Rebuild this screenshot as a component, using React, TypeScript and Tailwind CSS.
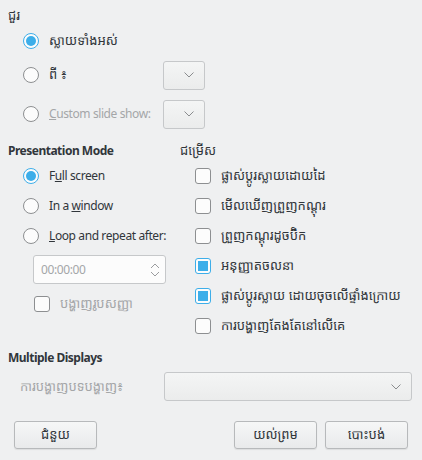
import React from "react";

const F = { fontFamily: '"Noto Sans", "Noto Sans Khmer", "Khmer OS", sans-serif' };
const L = "text-[12px] tracking-[-0.4px]";

function Radio({ checked, label, disabled, latin }: { checked?: boolean; label: React.ReactNode; disabled?: boolean; latin?: boolean }) {
  return (
    <div className="flex items-center h-[30px] whitespace-nowrap">
      <div
        className={
          "w-[16px] h-[16px] shrink-0 rounded-full border flex items-center justify-center bg-[#fcfcfc] " +
          (checked ? "border-[#3daee9]" : "border-[#8d8f91]")
        }
      >
        {checked && <div className="w-[10px] h-[10px] rounded-full bg-[#3daee9]" />}
      </div>
      <span className={"ml-[10px] " + (latin ? L + " " : "") + (disabled ? "text-[#a4a6a8]" : "text-[#31363b]")}>{label}</span>
    </div>
  );
}

function Check({ checked, label, disabled }: { checked?: boolean; label: React.ReactNode; disabled?: boolean }) {
  return (
    <div className="flex items-center h-[30px] whitespace-nowrap">
      <div
        className={
          "w-[16px] h-[16px] shrink-0 rounded-[3px] border flex items-center justify-center bg-[#fcfcfc] " +
          (checked ? "border-[#3daee9]" : "border-[#8d8f91]")
        }
      >
        {checked && <div className="w-[10px] h-[10px] bg-[#3daee9]" />}
      </div>
      <span className={"ml-[10px] " + (disabled ? "text-[#a4a6a8]" : "text-[#31363b]")}>{label}</span>
    </div>
  );
}

function Chevron() {
  return (
    <svg width="10" height="6" viewBox="0 0 10 6" fill="none">
      <path d="M0.5 0.5 L5 5 L9.5 0.5" stroke="#8a8c8e" strokeWidth="1" />
    </svg>
  );
}

function Combo({ className }: { className: string }) {
  return (
    <div
      className={
        "h-[29px] rounded-[3px] border border-[#c6c8ca] bg-gradient-to-b from-[#f4f5f5] to-[#ebecec] flex items-center justify-end pr-[10px] " +
        className
      }
    >
      <Chevron />
    </div>
  );
}

function Button({ label, className }: { label: string; className: string }) {
  return (
    <div
      className={
        "h-[28px] rounded-[3px] border border-[#b7b9bb] bg-gradient-to-b from-[#f6f7f7] to-[#e9eaeb] flex items-center justify-center text-[#31363b] shadow-[0_1px_1px_rgba(0,0,0,0.08)] " +
        className
      }
    >
      {label}
    </div>
  );
}

export default function App() {
  return (
    <div style={F} className="w-[422px] h-[460px] bg-[#eff0f1] text-[13px] text-[#31363b] overflow-hidden">
      <div className="pl-[8px] pt-[6px]">
        <div className="h-[20px] flex items-center">ជួរ</div>
        <div className="pl-[15px]">
          <Radio checked label="ស្លាយទាំងអស់" />
          <div className="flex items-center justify-between w-[182px] mt-[4px]">
            <Radio label="ពី ៖" />
            <Combo className="w-[42px]" />
          </div>
          <div className="flex items-center justify-between w-[182px] mt-[9px]">
            <Radio latin disabled label={<><u>C</u>ustom slide show:</>} />
            <Combo className="w-[42px]" />
          </div>
        </div>
      </div>

      <div className="flex pl-[8px] mt-[13px]">
        <div className="w-[172px]">
          <div className="font-bold h-[18px] flex items-center whitespace-nowrap text-[12px] tracking-[-0.5px]">Presentation Mode</div>
          <div className="pl-[15px] mt-[1px]">
            <Radio latin checked label={<>F<u>u</u>ll screen</>} />
            <Radio latin label={<>In a <u>w</u>indow</>} />
            <Radio latin label={<><u>L</u>oop and repeat after:</>} />
            <div className="ml-[10px] mt-[4px] w-[133px] h-[29px] rounded-[3px] border border-[#c6c8ca] bg-[#fcfcfc] flex items-center justify-between pl-[7px] pr-[5px] text-[#a4a6a8]">
              <span className={L}>00:00:00</span>
              <svg width="10" height="16" viewBox="0 0 10 16" fill="none">
                <path d="M1 6 L5 2 L9 6" stroke="#9a9c9e" />
                <path d="M1 10 L5 14 L9 10" stroke="#9a9c9e" />
              </svg>
            </div>
            <div className="ml-[11px] mt-[5px]">
              <Check disabled label="បង្ហាញរូបសញ្ញា" />
            </div>
          </div>
        </div>
        <div className="flex-1">
          <div className="h-[18px] flex items-center">ជម្រើស</div>
          <div className="pl-[15px] mt-[1px]">
            <Check label="ផ្លាស់ប្ដូរស្លាយដោយដៃ" />
            <Check label="មើលឃើញព្រួញកណ្ដុរ" />
            <Check label="ព្រួញកណ្ដុរដូចប៊ិក" />
            <Check checked label="អនុញ្ញាតចលនា" />
            <Check checked label="ផ្លាស់ប្ដូរស្លាយ ដោយចុចលើផ្ទាំងក្រោយ" />
            <Check label="ការបង្ហាញតែងតែនៅលើគេ" />
          </div>
        </div>
      </div>

      <div className="pl-[8px] mt-[8px]">
        <div className="font-bold h-[18px] flex items-center text-[12px] tracking-[-0.5px]">Multiple Displays</div>
        <div className="flex items-center mt-[5px] pr-[10px]">
          <div className="w-[156px] pl-[12px] text-[#a4a6a8] whitespace-nowrap">ការបង្ហាញបទបង្ហាញ៖</div>
          <Combo className="flex-1" />
        </div>
      </div>

      <div className="flex items-center pl-[14px] pr-[14px] mt-[20px]">
        <Button label="ជំនួយ" className="w-[83px]" />
        <div className="flex-1" />
        <Button label="យល់ព្រម" className="w-[83px]" />
        <Button label="បោះបង់" className="w-[83px] ml-[8px]" />
      </div>
    </div>
  );
}
